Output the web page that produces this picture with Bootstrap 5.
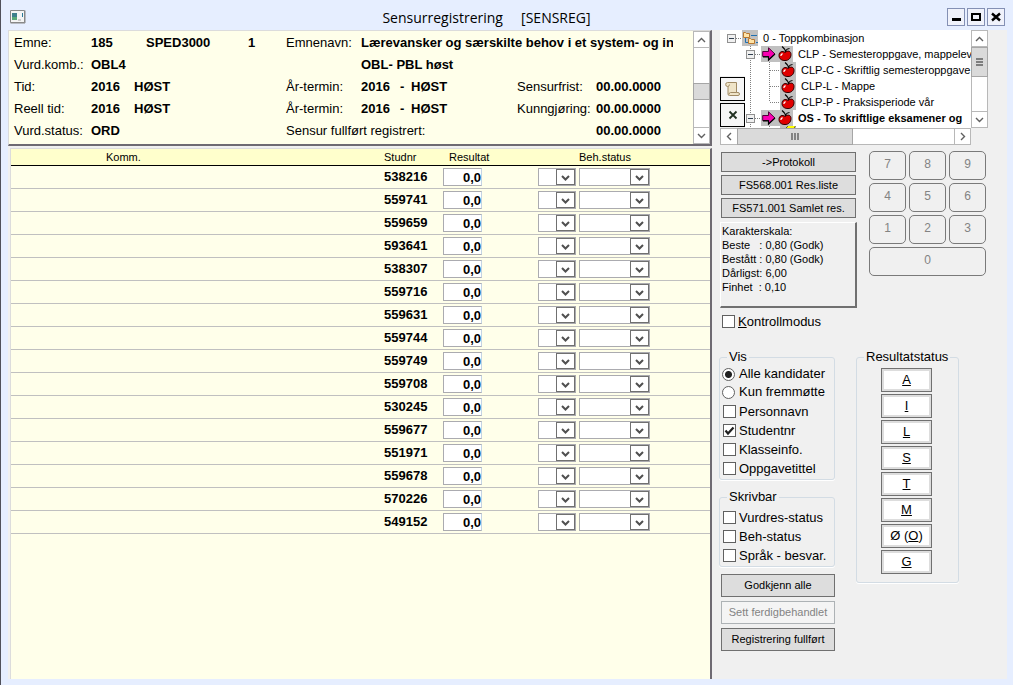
<!DOCTYPE html>
<html lang="no">
<head>
<meta charset="utf-8">
<meta name="viewport" content="width=device-width, initial-scale=1">
<title>Sensurregistrering [SENSREG]</title>
<link href="https://cdn.jsdelivr.net/npm/bootstrap@5.3.0/dist/css/bootstrap.min.css" rel="stylesheet">
<style>
  body { font-family: "Liberation Sans", Arial, sans-serif; font-size: 13px; line-height: 14px; color: #000; background: #e6eeff; }
  button, input, select { font-family: inherit; font-size: inherit; line-height: inherit; color: #000; }
  .app-window { border-left: 1px solid #50505a; padding: 0 6px 6px 7px; }
  .title-bar { height: 30px; padding: 6px 2px 0; }
  .title-bar h1 { font-family: "Open Sans", "Noto Sans", sans-serif; font-size: 14px; line-height: 24px; white-space: pre; }
  .win-btn { width: 18px; height: 18px; padding: 0; border: 1px solid #8490b4; border-radius: 0; background: #f0f2fb; display: flex; }
  .win-btns { gap: 2px; margin-top: 2px; }
  .work-area { background: #f0f0f0; }

  /* Header panel */
  .info-panel { background: #ffffea; border: solid; border-width: 1px 2px 2px 1px; border-color: #dcdcdc #6e6a72 #6e6a72 #dcdcdc; margin-bottom: 2px; }
  .info-grid { display: grid; grid-template-columns: 77px 43px 12px 102px 38px 75px 39px 11px 106px 79px 1fr; grid-auto-rows: 22px; align-items: center; padding: 1px 0 2px 5px; white-space: nowrap; min-width: 0; flex: 1; }
  .clip { overflow: hidden; margin-right: 20px; }
  .col-a { grid-column: 1; } .col-b { grid-column: 2 / span 2; } .col-hs { grid-column: 3 / span 2; }
  .col-f { grid-column: 6; } .col-wide { grid-column: 7 / -1; } .col-full { grid-column: 6 / span 4; } .col-date { grid-column: 11; }

  /* Scroll bars */
  .sb { display: flex; background: #fff; border: 1px solid #b8b8b8; flex: none; }
  .sb-v { width: 17px; flex-direction: column; }
  .sb-h { height: 17px; margin-right: 17px; }
  .sb button { border: 0 solid #b8b8b8; background: #fff; padding: 0; display: flex; align-items: center; justify-content: center; flex: none; }
  .sb-v button { height: 16px; } .sb-h button { width: 16px; }
  .sb .thumb { background: #dadada; border: 1px solid #a6a6a6; display: flex; align-items: center; justify-content: center; flex: none; }
  .sb-v .thumb { margin: 0 -1px; } .sb-h .thumb { margin: -1px 0; }
  .sb-v button:first-child { border-bottom-width: 1px; } .sb-v button:last-child { border-top-width: 1px; }
  .sb-h button:last-child { border-left-width: 1px; }
  .sb path { fill: none; stroke: #606060; stroke-width: 1.4; }

  /* Candidate list */
  .list-panel { background: #ffffea; border: solid; border-width: 1px 2px 0 1px; border-color: #dcdcdc #6e6a72 #dcdcdc #dcdcdc; margin-left: 2px; }
  .cand { width: 100%; table-layout: fixed; border-collapse: separate; border-spacing: 0; }
  .cand th { height: 17px; padding: 0; font-size: 11px; font-weight: 400; line-height: 16px; background: #ffc; border-bottom: 1px solid #000; }
  .cand td { height: 23px; padding: 0; border-bottom: 1px solid #c0c0c0; font-weight: 700; vertical-align: middle; }
  .cand input, .cand select { display: block; height: 18px; border: 1px solid #ababb0; border-radius: 0; background: #fff; }
  .cand input { width: 39px; padding: 0; text-align: right; font-weight: 700; border-right-color: #c4d4e4; }
  .cand select { width: 38px; padding: 0; appearance: none; background: #fff url("data:image/svg+xml,%3Csvg xmlns='http://www.w3.org/2000/svg' width='19' height='16'%3E%3Crect x='.5' y='.5' width='18' height='15' fill='white' stroke='%23707070'/%3E%3Cpath d='M6 7l3.500 3.500L13 7' fill='none' stroke='%23505050' stroke-width='2'/%3E%3C/svg%3E") no-repeat right center; }
  .cand select.beh { width: 71px; }

  /* Right side */
  .side { width: 295px; flex: none; padding: 0 0 0 8px; }
  .tree-wrap { width: 268px; }
  .tree-box { background: #fff; height: 98px; }
  .tree-list { height: 98px; overflow: hidden; font-size: 11px; white-space: nowrap; }
  .tree-list li { height: 16px; line-height: 16px; display: flex; }
  .tree-list svg { flex: none; }
  .tree-tools { left: 0; top: 46px; gap: 2px; background: #f0f0f0; padding: 1px 0; }
  .tree-tools button { display: flex; align-items: center; justify-content: center; width: 25px; height: 24px; padding: 0; background: #f6f6f6; border: 1px solid #000; }
  .dots { stroke: #808080; stroke-dasharray: 1 1; fill: none; }
  .tools-row { gap: 12px; padding-top: 6px; }
  .tools-col { width: 137px; padding-top: 1px; }
  .report-btns { gap: 3px; margin: 0 1px; }
  .btn-flat { display: block; width: 100%; padding: 0; border: 1px solid #707070; border-radius: 0; background: #ddd; font-size: 11px; line-height: 18px; color: #000; }
  .btn-tall { line-height: 21px; }
  .btn-flat:disabled { background: #f4f4f4; border-color: #adb2b5; color: #838383; opacity: 1; }
  .scale-box { height: 86px; margin-top: 4px; padding: 1px; border: solid; border-width: 1px 2px 2px 1px; border-color: #fff #707070 #707070 #fff; font-size: 11px; line-height: 14px; white-space: pre; }
  .keypad { display: grid; grid-template-columns: repeat(3, 37px); grid-auto-rows: 29px; gap: 3px; }
  .keypad button { border: 1px solid #7a7a7a; border-radius: 5px; background: #f0f0f0; color: #838383; padding: 0 0 4px; font-size: 12px; }
  .keypad .zero { grid-column: 1 / -1; }
  .opt { display: flex; align-items: center; height: 19px; gap: 3px; white-space: nowrap; }
  .opt-single { margin-top: 4px; padding-left: 2px; }
  .opt-radio { height: 18px; gap: 4px; }
  .opt input { appearance: none; flex: none; width: 13px; height: 13px; margin: 0; border: 1px solid #606060; background: #fff center no-repeat; }
  .opt input[type=radio] { border-radius: 50%; margin-left: -1px; }
  .opt input[type=radio]:checked { background-image: radial-gradient(circle, #202020 3px, transparent 4px); }
  .opt input[type=checkbox]:checked { background-image: url("data:image/svg+xml,%3Csvg xmlns='http://www.w3.org/2000/svg' width='11' height='11'%3E%3Cpath d='M1.500 5.500L4 8.500L9.500 2.500' fill='none' stroke='%23202020' stroke-width='2.200'/%3E%3C/svg%3E"); }
  .group { border: 1px solid #d3dce4; border-radius: 3px; padding: 0 3px 1px; box-shadow: 0 1px #fff; }
  .group legend { float: none; width: auto; margin: 0 0 0 4px; padding: 0 2px; font-size: 13px; line-height: 14px; }
  .group legend + .opt-radio { margin-top: 1px; }
  .opt-radio + .opt:not(.opt-radio) { margin-top: 1px; }
  .group-row { gap: 21px; padding-top: 19px; }
  .options { width: 116px; margin-left: -1px; }
  .options .group + .group { margin-top: 10px; }
  .options .group + .group legend { margin-bottom: 4px; }
  .finish-btns { gap: 4px; padding: 7px 0 0 2px; }
  .status-group { width: 103px; padding-right: 5px; }
  .status-list { gap: 2px; padding: 4px 0 7px; }
  .status-btn { width: 51px; height: 24px; padding: 0; border: 1px solid #707070; background: #fff; box-shadow: inset 0 0 0 2px #ddd; }
</style>
</head>
<body>
<svg width="0" height="0" class="position-absolute" aria-hidden="true">
  <symbol id="minus" viewBox="0 0 9 9"><rect x=".5" y=".5" width="8" height="8" fill="#f0f0f0" stroke="#909090"/><path d="M2 4.500h5" stroke="#304050"/></symbol>
  <symbol id="arrow" viewBox="0 0 14 14"><path d="M.7 4.500H6.500V.8L13 7L6.500 13.200V9.500H.7Z" fill="#f800b0" stroke="#500038"/><path d="M1 9.800H6.500V13L13 7" fill="none" stroke="#000" stroke-width="1.200"/></symbol>
  <symbol id="apple" viewBox="0 0 14 16"><path d="M7.500 6.500Q7.500 3 4 .500M7.500 5Q9 2.500 11.500 2.500" fill="none" stroke="#000" stroke-width="1.200"/><path d="M7 6.500C4.500 4.500 1 5.500 1 9.500C1 13 4 14.700 7 14.500C10 14.700 13 12.500 13 8.500C13 5 10 4 7 6.500Z" fill="#e00000" stroke="#300000"/><path d="M3 10V9L4.500 7.500" fill="none" stroke="#fff" stroke-width="1.200"/></symbol>
</svg>

<div class="app-window min-vh-100 d-flex flex-column">
  <header class="title-bar d-flex align-items-start">
    <svg class="mt-1" width="16" height="14" viewBox="0 0 16 14" aria-hidden="true"><path d="M.5 .5h14v12H.5z" fill="#f4f4f4" stroke="#888"/><path d="M15 .5v12.500H.5" fill="none" stroke="#888"/><path d="M2 3h5v7H2z" fill="#3d7f8c"/><path d="M2 7h5v3H2z" fill="#59a878"/><path d="M12.500 3v4" stroke="#2a7a9a"/><path d="M8 9h3v2H8z" fill="#ccc"/></svg>
    <h1 class="m-0 flex-grow-1 text-center fw-normal">Sensurregistrering     [SENSREG]</h1>
    <div class="win-btns d-flex">
      <button class="win-btn" aria-label="Minimer"><svg width="16" height="16"><path d="M4 9h9v3H4z"/></svg></button>
      <button class="win-btn" aria-label="Maksimer"><svg width="16" height="16"><path d="M4 5h8v6H4z" fill="none" stroke="#000" stroke-width="2"/></svg></button>
      <button class="win-btn" aria-label="Lukk"><svg width="16" height="16"><path d="M4 4.500l8 7M12 4.500l-8 7" stroke="#000" stroke-width="2.400"/></svg></button>
    </div>
  </header>

  <main class="work-area d-flex flex-grow-1">
    <div class="d-flex flex-column flex-grow-1">
      <section class="info-panel d-flex">
        <div class="info-grid">
          <span class="col-a">Emne:</span><b class="col-b">185</b><b>SPED3000</b><b>1</b><span>Emnenavn:</span><b class="col-wide clip">Lærevansker og særskilte behov i et system- og in</b>
          <span class="col-a">Vurd.komb.:</span><b class="col-b">OBL4</b><b class="col-wide">OBL- PBL høst</b>
          <span class="col-a">Tid:</span><b>2016</b><b class="col-hs">HØST</b><span class="col-f">År-termin:</span><b>2016</b><b>-</b><b>HØST</b><span>Sensurfrist:</span><b>00.00.0000</b>
          <span class="col-a">Reell tid:</span><b>2016</b><b class="col-hs">HØST</b><span class="col-f">År-termin:</span><b>2016</b><b>-</b><b>HØST</b><span>Kunngjøring:</span><b>00.00.0000</b>
          <span class="col-a">Vurd.status:</span><b class="col-b">ORD</b><span class="col-full">Sensur fullført registrert:</span><b class="col-date">00.00.0000</b>
        </div>
        <div class="sb sb-v">
          <button aria-label="Opp"><svg width="9" height="6"><path d="M1 5l3.500-3.500L8 5"/></svg></button>
          <div class="flex-grow-1"></div><div class="flex-grow-1"></div><div class="flex-grow-1"></div><div class="flex-grow-1"></div>
          <div class="thumb" style="height:17px"></div>
          <div class="flex-grow-1"></div><div class="flex-grow-1"></div><div class="flex-grow-1"></div>
          <button aria-label="Ned"><svg width="9" height="6"><path d="M1 1l3.500 3.500L8 1"/></svg></button>
        </div>
      </section>

      <section class="list-panel flex-grow-1">
        <table class="cand">
          <colgroup><col><col style="width:59px"><col style="width:95px"><col style="width:41px"><col style="width:131px"></colgroup>
          <thead><tr><th style="padding-left:95px">Komm.</th><th>Studnr</th><th style="padding-left:6px">Resultat</th><th></th><th>Beh.status</th></tr></thead>
          <tbody>
            <tr><td></td><td>538216</td><td><input value="0,0" aria-label="Resultat"></td><td><select aria-label="Status"><option></option></select></td><td><select class="beh" aria-label="Beh.status"><option></option></select></td></tr>
            <tr><td></td><td>559741</td><td><input value="0,0" aria-label="Resultat"></td><td><select aria-label="Status"><option></option></select></td><td><select class="beh" aria-label="Beh.status"><option></option></select></td></tr>
            <tr><td></td><td>559659</td><td><input value="0,0" aria-label="Resultat"></td><td><select aria-label="Status"><option></option></select></td><td><select class="beh" aria-label="Beh.status"><option></option></select></td></tr>
            <tr><td></td><td>593641</td><td><input value="0,0" aria-label="Resultat"></td><td><select aria-label="Status"><option></option></select></td><td><select class="beh" aria-label="Beh.status"><option></option></select></td></tr>
            <tr><td></td><td>538307</td><td><input value="0,0" aria-label="Resultat"></td><td><select aria-label="Status"><option></option></select></td><td><select class="beh" aria-label="Beh.status"><option></option></select></td></tr>
            <tr><td></td><td>559716</td><td><input value="0,0" aria-label="Resultat"></td><td><select aria-label="Status"><option></option></select></td><td><select class="beh" aria-label="Beh.status"><option></option></select></td></tr>
            <tr><td></td><td>559631</td><td><input value="0,0" aria-label="Resultat"></td><td><select aria-label="Status"><option></option></select></td><td><select class="beh" aria-label="Beh.status"><option></option></select></td></tr>
            <tr><td></td><td>559744</td><td><input value="0,0" aria-label="Resultat"></td><td><select aria-label="Status"><option></option></select></td><td><select class="beh" aria-label="Beh.status"><option></option></select></td></tr>
            <tr><td></td><td>559749</td><td><input value="0,0" aria-label="Resultat"></td><td><select aria-label="Status"><option></option></select></td><td><select class="beh" aria-label="Beh.status"><option></option></select></td></tr>
            <tr><td></td><td>559708</td><td><input value="0,0" aria-label="Resultat"></td><td><select aria-label="Status"><option></option></select></td><td><select class="beh" aria-label="Beh.status"><option></option></select></td></tr>
            <tr><td></td><td>530245</td><td><input value="0,0" aria-label="Resultat"></td><td><select aria-label="Status"><option></option></select></td><td><select class="beh" aria-label="Beh.status"><option></option></select></td></tr>
            <tr><td></td><td>559677</td><td><input value="0,0" aria-label="Resultat"></td><td><select aria-label="Status"><option></option></select></td><td><select class="beh" aria-label="Beh.status"><option></option></select></td></tr>
            <tr><td></td><td>551971</td><td><input value="0,0" aria-label="Resultat"></td><td><select aria-label="Status"><option></option></select></td><td><select class="beh" aria-label="Beh.status"><option></option></select></td></tr>
            <tr><td></td><td>559678</td><td><input value="0,0" aria-label="Resultat"></td><td><select aria-label="Status"><option></option></select></td><td><select class="beh" aria-label="Beh.status"><option></option></select></td></tr>
            <tr><td></td><td>570226</td><td><input value="0,0" aria-label="Resultat"></td><td><select aria-label="Status"><option></option></select></td><td><select class="beh" aria-label="Beh.status"><option></option></select></td></tr>
            <tr><td></td><td>549152</td><td><input value="0,0" aria-label="Resultat"></td><td><select aria-label="Status"><option></option></select></td><td><select class="beh" aria-label="Beh.status"><option></option></select></td></tr>
          </tbody>
        </table>
      </section>
    </div>

    <aside class="side">
      <div class="tree-wrap">
        <div class="tree-box d-flex position-relative">
          <ul class="tree-list list-unstyled m-0 flex-grow-1">
            <li><svg width="43" height="16"><path class="dots" d="M16 8.500h6M30.500 12v4"/><use href="#minus" x="7" y="4" width="9" height="9"/><path d="M22 0h16v16H22z" fill="#c0c0c0"/><path d="M25.500 7v5.500h3M31 5.500h6M36 12.500h2" fill="none" stroke="#2070b0"/><path d="M23.500 2.500h2l1 1h3v4h-6zM28.500 8.500h2l1 1h3v4h-6z" fill="#ffe4a8" stroke="#b87830"/></svg>0 - Toppkombinasjon</li>
            <li><svg width="78" height="16"><path class="dots" d="M30.500 0v16M35 8.500h6M49.500 12v4"/><use href="#minus" x="26" y="4" width="9" height="9"/><path d="M41 0h32v16H41z" fill="#c0c0c0"/><use href="#arrow" x="42" y="1" width="14" height="14"/><use href="#apple" x="58" y="0" width="14" height="16"/></svg>CLP - Semesteroppgave, mappeleve</li>
            <li><svg width="81" height="16"><path class="dots" d="M30.500 0v16M49.500 0v16M50 8.500h10"/><path d="M60 0h16v16H60z" fill="#c0c0c0"/><use href="#apple" x="61" y="0" width="14" height="16"/></svg>CLP-C - Skriftlig semesteroppgave</li>
            <li><svg width="81" height="16"><path class="dots" d="M30.500 0v16M49.500 0v16M50 8.500h10"/><path d="M60 0h16v16H60z" fill="#c0c0c0"/><use href="#apple" x="61" y="0" width="14" height="16"/></svg>CLP-L - Mappe</li>
            <li><svg width="81" height="16"><path class="dots" d="M30.500 0v16M49.500 0v8M50 8.500h10"/><path d="M60 0h16v16H60z" fill="#c0c0c0"/><use href="#apple" x="61" y="0" width="14" height="16"/></svg>CLP-P - Praksisperiode vår</li>
            <li class="fw-bold"><svg width="78" height="16"><path class="dots" d="M30.500 0v16M35 8.500h6"/><use href="#minus" x="26" y="4" width="9" height="9"/><path d="M41 0h32v16H41z" fill="#c0c0c0"/><use href="#arrow" x="42" y="1" width="14" height="14"/><use href="#apple" x="58" y="0" width="14" height="16"/></svg>OS - To skriftlige eksamener og</li>
            <li><svg width="81" height="16"><path class="dots" d="M30.500 0v16M49.500 0v16"/><path d="M60 0h16v16H60z" fill="#c0c0c0"/><path d="M66 2l3-3h7l-3 5z" fill="#ff0" stroke="#000" stroke-width=".5"/></svg></li>
          </ul>
          <div class="sb sb-v">
            <button aria-label="Opp"><svg width="9" height="6"><path d="M1 5l3.500-3.500L8 5"/></svg></button>
            <div class="thumb" style="height:30px"><svg width="7" height="8"><path d="M0 1h7M0 4h7M0 7h7"/></svg></div>
            <div class="flex-grow-1"></div>
            <button aria-label="Ned"><svg width="9" height="6"><path d="M1 1l3.500 3.500L8 1"/></svg></button>
          </div>
          <div class="tree-tools position-absolute d-flex flex-column">
            <button aria-label="Protokoll"><svg width="15" height="16"><path d="M2.500 1.500h9v10h1.500q1.500 0 1.500 1.500t-1.500 1.500H4.500q-1.500 0-1.500-1.500V5.500H2.500q-1.800 0-1.800-2t1.800-2z" fill="#efe4c8" stroke="#a08a64"/><path d="M3 5.500q1.500-.5 1.500-2M11.500 11.500H5.500q-1.500 0-1.500 2" fill="none" stroke="#a08a64"/></svg></button>
            <button aria-label="Fjern"><svg width="10" height="10"><path d="M1.500 1.500l7 7M8.500 1.500l-7 7" stroke="#203020" stroke-width="1.800"/></svg></button>
          </div>
        </div>
        <div class="sb sb-h">
          <button aria-label="Venstre"><svg width="6" height="9"><path d="M5 1L1.500 4.500 5 8"/></svg></button>
          <div class="thumb" style="width:116px"><svg width="8" height="7"><path d="M1 0v7M4 0v7M7 0v7"/></svg></div>
          <div class="flex-grow-1"></div>
          <button aria-label="Høyre"><svg width="6" height="9"><path d="M1 1l3.500 3.500L1 8"/></svg></button>
        </div>
      </div>

      <div class="tools-row d-flex">
        <div class="tools-col">
          <div class="report-btns d-flex flex-column">
            <button class="btn-flat">-&gt;Protokoll</button>
            <button class="btn-flat">FS568.001 Res.liste</button>
            <button class="btn-flat">FS571.001 Samlet res.</button>
          </div>
          <div class="scale-box">Karakterskala:
Beste   : 0,80 (Godk)
Bestått : 0,80 (Godk)
Dårligst: 6,00
Finhet  : 0,10</div>
          <label class="opt opt-single"><input type="checkbox"><span><u>K</u>ontrollmodus</span></label>
        </div>
        <div class="keypad">
          <button disabled>7</button><button disabled>8</button><button disabled>9</button>
          <button disabled>4</button><button disabled>5</button><button disabled>6</button>
          <button disabled>1</button><button disabled>2</button><button disabled>3</button>
          <button class="zero" disabled>0</button>
        </div>
      </div>

      <div class="group-row d-flex align-items-start">
        <div class="options">
          <fieldset class="group">
            <legend>Vis</legend>
            <label class="opt opt-radio"><input type="radio" name="vis" checked>Alle kandidater</label>
            <label class="opt opt-radio"><input type="radio" name="vis">Kun fremmøtte</label>
            <label class="opt"><input type="checkbox">Personnavn</label>
            <label class="opt"><input type="checkbox" checked>Studentnr</label>
            <label class="opt"><input type="checkbox">Klasseinfo.</label>
            <label class="opt"><input type="checkbox">Oppgavetittel</label>
          </fieldset>
          <fieldset class="group">
            <legend>Skrivbar</legend>
            <label class="opt"><input type="checkbox">Vurdres-status</label>
            <label class="opt"><input type="checkbox">Beh-status</label>
            <label class="opt"><input type="checkbox">Språk - besvar.</label>
          </fieldset>
          <div class="finish-btns d-flex flex-column">
            <button class="btn-flat btn-tall">Godkjenn alle</button>
            <button class="btn-flat btn-tall" disabled>Sett ferdigbehandlet</button>
            <button class="btn-flat btn-tall">Registrering fullført</button>
          </div>
        </div>
        <fieldset class="group status-group">
          <legend>Resultatstatus</legend>
          <div class="status-list d-flex flex-column align-items-center">
            <button class="status-btn"><u>A</u></button>
            <button class="status-btn"><u>I</u></button>
            <button class="status-btn"><u>L</u></button>
            <button class="status-btn"><u>S</u></button>
            <button class="status-btn"><u>T</u></button>
            <button class="status-btn"><u>M</u></button>
            <button class="status-btn">Ø (<u>O</u>)</button>
            <button class="status-btn"><u>G</u></button>
          </div>
        </fieldset>
      </div>
    </aside>
  </main>
</div>
<script src="https://cdn.jsdelivr.net/npm/bootstrap@5.3.0/dist/js/bootstrap.bundle.min.js"></script>
</body>
</html>
